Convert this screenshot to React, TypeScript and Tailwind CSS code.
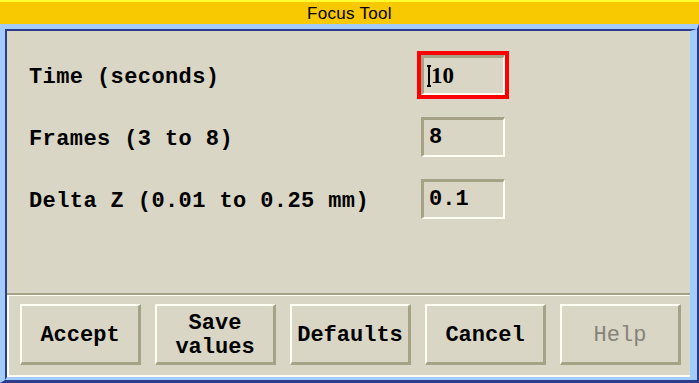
import React from 'react';

const mono = { fontFamily: '"Liberation Mono", "DejaVu Sans Mono", monospace' };

const rows = [
  { label: 'Time (seconds)', value: '10', focused: true },
  { label: 'Frames (3 to 8)', value: '8', focused: false },
  { label: 'Delta Z (0.01 to 0.25 mm)', value: '0.1', focused: false },
];

const buttons = [
  { text: 'Accept' },
  { text: 'Save\nvalues' },
  { text: 'Defaults' },
  { text: 'Cancel' },
  { text: 'Help', disabled: true },
];

function Field({ value, focused }: { value: string; focused: boolean }) {
  return (
    <div className={`w-[92px] h-[48px] border-4 ${focused ? 'border-[#ff0000]' : 'border-transparent'}`}>
      <div className="w-full h-full flex items-center pl-[4px] border-t-[3px] border-l-[3px] border-t-[#a6a286] border-l-[#a6a286] border-b-2 border-r-2 border-b-[#fffff4] border-r-[#fffff4]">
        {focused ? (
          <div className="flex items-center">
            <div className="relative w-[2px] h-[22px] bg-black mr-[1px]">
              <div className="absolute -left-[1px] top-0 w-[4px] h-[2px] bg-black" />
              <div className="absolute -left-[1px] bottom-0 w-[4px] h-[2px] bg-black" />
            </div>
            <span
              className="text-[23px] font-bold text-black leading-none"
              style={{ fontFamily: '"Liberation Serif", "Times New Roman", serif' }}
            >
              {value}
            </span>
          </div>
        ) : (
          <span className="text-[22px] font-bold text-black leading-none pl-[1px]" style={mono}>
            {value}
          </span>
        )}
      </div>
    </div>
  );
}

export default function App() {
  return (
    <div className="w-[699px] h-[383px] flex flex-col bg-[#d9d6c6] overflow-hidden">
      <div className="h-[24px] shrink-0 bg-[#f8c800] border-t-2 border-[#ffff30] flex items-center justify-center">
        <span
          className="text-[17px] text-black leading-none tracking-[0.3px]"
          style={{ fontFamily: '"Liberation Sans", Arial, sans-serif' }}
        >
          Focus Tool
        </span>
      </div>

      <div className="flex-1 flex flex-col border-t-[5px] border-l-[5px] border-t-[#a4ccfa] border-l-[#a4ccfa] border-r-2 border-b-[3px] border-r-[#2c3c8c] border-b-[#2c3c8c]">
        <div className="flex-1 flex flex-col border-t-2 border-l-2 border-t-[#2c3c8c] border-l-[#2c3c8c] border-r-[7px] border-b-[3px] border-r-[#a4ccfa] border-b-[#a4ccfa]">
          <div className="flex-1 flex flex-col gap-[14px] pt-[20px] pl-[22px]">
            {rows.map((r) => (
              <div key={r.label} className="flex items-center h-[48px]">
                <div
                  className="w-[388px] pt-[5px] text-[22px] font-bold text-black leading-none tracking-[0.4px]"
                  style={mono}
                >
                  {r.label}
                </div>
                <Field value={r.value} focused={r.focused} />
              </div>
            ))}
          </div>

          <div className="h-[84px] shrink-0 flex flex-col border-t-2 border-[#a6a286]">
            <div className="flex-1 flex gap-[14px] pl-[11px] pt-[8px] border-t border-l-2 border-b-2 border-[#fffff4]">
              {buttons.map((b) => (
                <div
                  key={b.text}
                  className="w-[121px] h-[61px] flex items-center justify-center pt-[3px] border-t-2 border-l-2 border-t-[#fffff4] border-l-[#fffff4] border-b-[3px] border-r-[3px] border-b-[#a6a286] border-r-[#a6a286]"
                >
                  <span
                    className={`text-[22px] font-bold leading-[24px] text-center whitespace-pre ${b.disabled ? 'text-[#85837a] font-normal' : 'text-black'}`}
                    style={mono}
                  >
                    {b.text}
                  </span>
                </div>
              ))}
            </div>
          </div>
        </div>
      </div>
    </div>
  );
}
